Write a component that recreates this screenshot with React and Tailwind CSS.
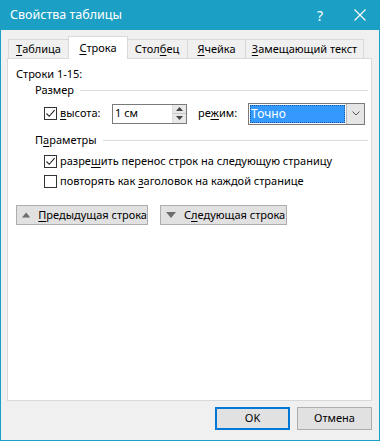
import React from "react";

const U = ({ children }) => <span className="underline underline-offset-2 decoration-1">{children}</span>;

function Check({ checked }) {
  return (
    <div className="w-[13px] h-[13px] border border-[#333] bg-white flex items-center justify-center shrink-0">
      {checked && (
        <svg width="11" height="11" viewBox="0 0 11 11">
          <path d="M1.5 5.5 L4.2 8.3 L9.6 2.2" fill="none" stroke="#222" strokeWidth="1.1" />
        </svg>
      )}
    </div>
  );
}

function Tab({ w, selected, children }) {
  if (selected) {
    return (
      <div
        className={`${w} h-[23px] -mb-px bg-white border border-b-0 border-[#d9d9d9] flex items-center justify-center relative z-10 -mx-px whitespace-nowrap`}
      >
        {children}
      </div>
    );
  }
  return (
    <div className={`${w} h-[19px] border border-[#d9d9d9] border-b-0 -ml-px first:ml-0 bg-[#f0f0f0] flex items-center justify-center whitespace-nowrap`}>
      {children}
    </div>
  );
}

export default function App() {
  return (
    <div
      className="w-[380px] h-[441px] bg-[#f0f0f0] border border-t-0 border-[#1c9fc4] flex flex-col text-[11px] text-black"
      style={{ fontFamily: '"Noto Sans", "Open Sans", sans-serif' }}
    >
      {/* Title bar */}
      <div className="h-[30px] bg-[#1c9fc4] -mx-px flex items-center text-white shrink-0">
        <div className="pl-[10px] text-[12.5px] flex-1">Свойства таблицы</div>
        <div className="w-[20px] text-[14px] text-center mr-[20px]">?</div>
        <div className="w-[20px] h-[20px] mr-[10px] flex items-center justify-center">
          <svg width="12" height="12" viewBox="0 0 12 12">
            <path d="M0.5 0.5 L11.5 11.5 M11.5 0.5 L0.5 11.5" stroke="white" strokeWidth="1.1" />
          </svg>
        </div>
      </div>

      {/* Tabs */}
      <div className="pl-[7px] mt-[5px] flex items-end h-[23px]">
        <Tab w="w-[61px]">
          <U>Т</U>аблица
        </Tab>
        <Tab w="w-[60px]" selected>
          <U>С</U>трока
        </Tab>
        <Tab w="w-[62px]">
          Стол<U>б</U>ец
        </Tab>
        <Tab w="w-[59px]">
          <U>Я</U>чейка
        </Tab>
        <Tab w="w-[119px]">
          <U>З</U>амещающий текст
        </Tab>
      </div>

      {/* Panel */}
      <div className="ml-[6px] w-[365px] h-[343px] bg-white border border-[#d9d9d9] pt-[7px] pl-[8px] pr-[3px]">
        <div className="h-[16px] flex items-center">Строки 1-15:</div>
        <div className="h-[16px] flex items-center pl-[19px]">
          <span>Размер</span>
          <div className="flex-1 h-px bg-[#dcdcdc] ml-[6px]" />
        </div>
        <div className="flex items-center mt-[5px] pl-[28px] h-[21px]">
          <Check checked />
          <span className="ml-[3px] w-[52px]">
            <U>в</U>ысота:
          </span>
          <div className="w-[75px] h-[20px] border border-[#7a7a7a] flex bg-white">
            <div className="flex-1 pl-[2px] flex items-center">1 см</div>
            <div className="w-[14px] flex flex-col border-l border-[#dcdcdc]">
              <div className="flex-1 flex items-center justify-center bg-[#e8e8e8] border-b border-[#c8c8c8]">
                <svg width="7" height="4" viewBox="0 0 7 4"><path d="M0 4 L3.5 0 L7 4Z" fill="#444" /></svg>
              </div>
              <div className="flex-1 flex items-center justify-center bg-[#e8e8e8]">
                <svg width="7" height="4" viewBox="0 0 7 4"><path d="M0 0 L3.5 4 L7 0Z" fill="#444" /></svg>
              </div>
            </div>
          </div>
          <span className="ml-[11px] w-[50px]">
            ре<U>ж</U>им:
          </span>
          <div className="w-[117px] h-[22px] border border-[#7a7a7a] flex bg-white">
            <div className="flex-1 m-[1px] bg-[#3399ff] text-white text-[12px] flex items-center pl-[1px] outline outline-1 outline-dotted outline-[#000]/40 -outline-offset-1">
              Точно
            </div>
            <div className="w-[18px] bg-[#e5e5e5] border-l border-[#bbb] flex items-center justify-center">
              <svg width="8" height="5" viewBox="0 0 8 5"><path d="M0.5 0.5 L4 4 L7.5 0.5" fill="none" stroke="#555" strokeWidth="1" /></svg>
            </div>
          </div>
        </div>
        <div className="h-[16px] flex items-center mt-[8px] pl-[19px]">
          <span>
            П<U>а</U>раметры
          </span>
          <div className="flex-1 h-px bg-[#dcdcdc] ml-[6px]" />
        </div>
        <div className="h-[16px] flex items-center mt-[5px] pl-[28px]">
          <Check checked />
          <span className="ml-[3px]">
            разре<U>ш</U>ить перенос строк на следующую страницу
          </span>
        </div>
        <div className="h-[16px] flex items-center mt-[4px] pl-[28px]">
          <Check />
          <span className="ml-[3px]">
            повторять как <U>з</U>аголовок на каждой странице
          </span>
        </div>
        <div className="flex items-center mt-[16px] pl-[0px] gap-[12px]">
          <div className="w-[132px] h-[20px] bg-[#e1e1e1] border border-[#adadad] flex items-center pl-[5px] whitespace-nowrap">
            <svg width="10" height="6" viewBox="0 0 10 6" className="mr-[8px]"><path d="M0 6 L5 0 L10 6Z" fill="#6d6d6d" /></svg>
            <span><U>П</U>редыдущая строка</span>
          </div>
          <div className="w-[127px] h-[20px] bg-[#e1e1e1] border border-[#adadad] flex items-center pl-[5px] whitespace-nowrap">
            <svg width="10" height="6" viewBox="0 0 10 6" className="mr-[8px]"><path d="M0 0 L5 6 L10 0Z" fill="#6d6d6d" /></svg>
            <span>С<U>л</U>едующая строка</span>
          </div>
        </div>
      </div>

      {/* Footer buttons */}
      <div className="flex justify-end gap-[7px] pr-[7px] mt-[6px]">
        <div className="w-[75px] h-[23px] bg-[#e1e1e1] border-2 border-[#0078d7] flex items-center justify-center">OK</div>
        <div className="w-[75px] h-[23px] bg-[#e1e1e1] border border-[#adadad] flex items-center justify-center">Отмена</div>
      </div>
    </div>
  );
}
